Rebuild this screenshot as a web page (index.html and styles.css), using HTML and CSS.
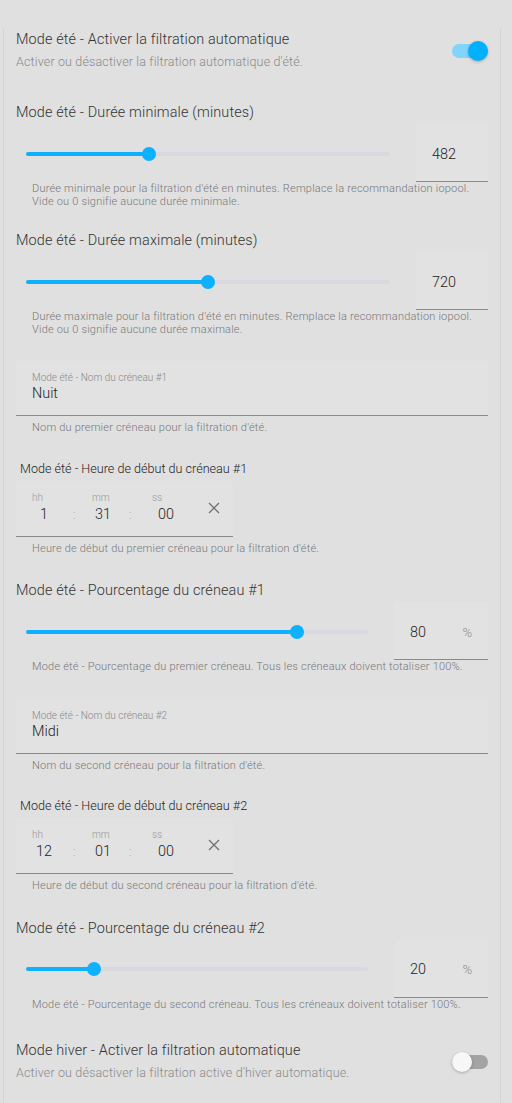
FILE: index.html
```html
<!DOCTYPE html>
<html lang="fr">
<head>
	<meta charset="UTF-8">
	<title>Filtration</title>
	<link rel="stylesheet" href="styles.css">
</head>
<body>
	<div class="card">
		<div class="toggle-row first">
			<div class="info">
				<div class="name">Mode été - Activer la filtration automatique</div>
				<div class="desc">Activer ou désactiver la filtration automatique d'été.</div>
			</div>
			<span class="switch on"><span class="track"></span><span class="thumb"></span></span>
		</div>

		<div class="num-entity first-num">
			<div class="name">Mode été - Durée minimale (minutes)</div>
			<div class="slider-row">
				<div class="slider">
					<div class="rail"><div class="fill" style="width:33.8%"></div><span class="knob" style="left:33.8%"></span></div>
				</div>
				<div class="num-field wide"><span class="val">482</span></div>
			</div>
			<div class="helper">Durée minimale pour la filtration d'été en minutes. Remplace la recommandation iopool.<br>Vide ou 0 signifie aucune durée minimale.</div>
		</div>

		<div class="num-entity">
			<div class="name">Mode été - Durée maximale (minutes)</div>
			<div class="slider-row">
				<div class="slider">
					<div class="rail"><div class="fill" style="width:50%"></div><span class="knob" style="left:50%"></span></div>
				</div>
				<div class="num-field wide"><span class="val">720</span></div>
			</div>
			<div class="helper">Durée maximale pour la filtration d'été en minutes. Remplace la recommandation iopool.<br>Vide ou 0 signifie aucune durée maximale.</div>
		</div>

		<div class="text-entity">
			<div class="text-field">
				<div class="tf-label">Mode été - Nom du créneau #1</div>
				<div class="tf-value">Nuit</div>
			</div>
			<div class="helper">Nom du premier créneau pour la filtration d'été.</div>
		</div>

		<div class="time-entity">
			<div class="time-label">Mode été - Heure de début du créneau #1</div>
			<div class="time-field">
				<div class="unit u-hh"><span class="u-label">hh</span><span class="u-val">1</span></div>
				<span class="colon c1">:</span>
				<div class="unit u-mm"><span class="u-label">mm</span><span class="u-val">31</span></div>
				<span class="colon c2">:</span>
				<div class="unit u-ss"><span class="u-label">ss</span><span class="u-val">00</span></div>
				<span class="clear">
					<svg width="12" height="12" viewBox="0 0 12 12"><path d="M1 1L11 11M11 1L1 11" stroke="#6f6f6f" stroke-width="1.3" fill="none"/></svg>
				</span>
			</div>
			<div class="helper">Heure de début du premier créneau pour la filtration d'été.</div>
		</div>

		<div class="num-entity">
			<div class="name">Mode été - Pourcentage du créneau #1</div>
			<div class="slider-row">
				<div class="slider">
					<div class="rail"><div class="fill" style="width:79.2%"></div><span class="knob" style="left:79.2%"></span></div>
				</div>
				<div class="num-field pct"><span class="val">80</span><span class="suffix">%</span></div>
			</div>
			<div class="helper">Mode été - Pourcentage du premier créneau. Tous les créneaux doivent totaliser 100%.</div>
		</div>

		<div class="text-entity">
			<div class="text-field">
				<div class="tf-label">Mode été - Nom du créneau #2</div>
				<div class="tf-value">Midi</div>
			</div>
			<div class="helper">Nom du second créneau pour la filtration d'été.</div>
		</div>

		<div class="time-entity">
			<div class="time-label">Mode été - Heure de début du créneau #2</div>
			<div class="time-field">
				<div class="unit u-hh"><span class="u-label">hh</span><span class="u-val">12</span></div>
				<span class="colon c1">:</span>
				<div class="unit u-mm"><span class="u-label">mm</span><span class="u-val">01</span></div>
				<span class="colon c2">:</span>
				<div class="unit u-ss"><span class="u-label">ss</span><span class="u-val">00</span></div>
				<span class="clear">
					<svg width="12" height="12" viewBox="0 0 12 12"><path d="M1 1L11 11M11 1L1 11" stroke="#6f6f6f" stroke-width="1.3" fill="none"/></svg>
				</span>
			</div>
			<div class="helper">Heure de début du second créneau pour la filtration d'été.</div>
		</div>

		<div class="num-entity">
			<div class="name">Mode été - Pourcentage du créneau #2</div>
			<div class="slider-row">
				<div class="slider">
					<div class="rail"><div class="fill" style="width:20%"></div><span class="knob" style="left:20%"></span></div>
				</div>
				<div class="num-field pct"><span class="val">20</span><span class="suffix">%</span></div>
			</div>
			<div class="helper">Mode été - Pourcentage du second créneau. Tous les créneaux doivent totaliser 100%.</div>
		</div>

		<div class="toggle-row last">
			<div class="info">
				<div class="name">Mode hiver - Activer la filtration automatique</div>
				<div class="desc">Activer ou désactiver la filtration active d'hiver automatique.</div>
			</div>
			<span class="switch off"><span class="track"></span><span class="thumb"></span></span>
		</div>
	</div>
</body>
</html>
```

FILE: styles.css
```css
*{
	margin:0;
	padding:0;
	box-sizing:border-box;
}
html,body{
	background:#e0e0e0;
}
body{
	font-family:Roboto,"Liberation Sans",sans-serif;
	font-weight:300;
	color:#3a3a3a;
}
.card{
	margin-left:3px;
	width:498px;
	min-height:1103px;
	border-left:1px solid #d3d3d3;
	border-right:1px solid #d3d3d3;
	padding:0 12px 30px;
}

/* toggle rows */
.toggle-row{
	display:flex;
	align-items:center;
	justify-content:space-between;
}
.toggle-row.first{
	margin-top:29px;
}
.toggle-row.last{
	margin-top:29px;
}
.name{
	font-size:14.4px;
	line-height:20px;
	padding-top:1px;
	color:#333;
	letter-spacing:0.15px;
}
.desc{
	margin-top:2px;
	font-size:12.5px;
	line-height:20px;
	color:#8a8a8a;
	letter-spacing:0.15px;
}
.switch{
	position:relative;
	display:block;
	width:36px;
	height:20px;
}
.switch .track{
	position:absolute;
	left:0;
	top:3px;
	width:36px;
	height:14px;
	border-radius:7px;
}
.switch .thumb{
	position:absolute;
	top:0;
	width:20px;
	height:20px;
	border-radius:50%;
	box-shadow:0 1px 3px rgba(0,0,0,.25);
}
.switch.on .track{
	background:#81d4fc;
}
.switch.on .thumb{
	right:0;
	background:#03b0fc;
}
.switch.off .track{
	background:#a3a3a3;
}
.switch.off .thumb{
	left:0;
	background:#f7f7f7;
}

/* number entities */
.num-entity{
	margin-top:22px;
}
.num-entity.first-num{
	margin-top:30px;
}
.time-entity + .num-entity{
	margin-top:25px;
}
.slider-row{
	display:flex;
	margin-top:1px;
	height:58px;
}
.slider{
	flex:1;
	padding:1px 10px 0;
	margin-right:16px;
	display:flex;
	align-items:center;
}
.rail{
	position:relative;
	width:100%;
	height:4px;
	border-radius:2px;
	background:#dbd7df;
}
.fill{
	height:4px;
	border-radius:2px;
	background:#0db1fd;
}
.knob{
	position:absolute;
	top:50%;
	width:14px;
	height:14px;
	margin:-7px 0 0 -7px;
	border-radius:50%;
	background:#0db1fd;
}
.num-field{
	display:flex;
	align-items:center;
	justify-content:space-between;
	padding:3px 16px 0;
	background:#e2e2e2;
	border-bottom:1px solid #8a8a8a;
	border-radius:4px 4px 0 0;
}
.num-field.wide{
	width:72px;
}
.num-field.pct{
	width:94px;
}
.val{
	font-size:14.4px;
	color:#222;
}
.suffix{
	font-size:13px;
	color:#8a8a8a;
}
.helper{
	margin-top:1px;
	padding-left:16px;
	font-size:11px;
	line-height:12.5px;
	color:#777;
	letter-spacing:0.2px;
}

/* text field */
.text-entity{
	margin-top:25px;
}
.text-field{
	padding:10px 16px 12px;
	background:#e2e2e2;
	border-bottom:1px solid #8a8a8a;
	border-radius:4px 4px 0 0;
}
.tf-label{
	font-size:10px;
	line-height:14px;
	color:#888;
}
.tf-value{
	font-size:14.4px;
	line-height:18px;
	color:#222;
}
.text-entity .helper,
.time-entity .helper{
	margin-top:6px;
}

/* time input */
.time-entity{
	margin-top:26px;
}
.time-label{
	padding-left:4px;
	font-size:12.6px;
	line-height:16px;
	color:#1e1e1e;
}
.time-field{
	display:flex;
	align-items:flex-end;
	width:217px;
	margin-top:4px;
	padding:10px 4px 11px 16px;
	background:#e2e2e2;
	border-bottom:1px solid #8a8a8a;
	border-radius:4px 4px 0 0;
}
.unit{
	display:flex;
	flex-direction:column;
}
.u-label{
	font-size:10px;
	line-height:14px;
	color:#999;
}
.u-val{
	font-size:14.4px;
	line-height:20px;
	text-align:center;
	color:#222;
}
.u-hh{
	width:24px;
}
.u-mm{
	width:22px;
}
.u-ss{
	width:28px;
}
.colon{
	font-size:13px;
	line-height:20px;
	color:#a8a8a8;
	text-align:center;
}
.colon.c1{
	width:36px;
}
.colon.c2{
	width:38px;
	padding-right:6px;
}
.clear{
	display:flex;
	align-items:center;
	justify-content:center;
	width:28px;
	height:20px;
	margin:0 0 7px 20px;
}
```
